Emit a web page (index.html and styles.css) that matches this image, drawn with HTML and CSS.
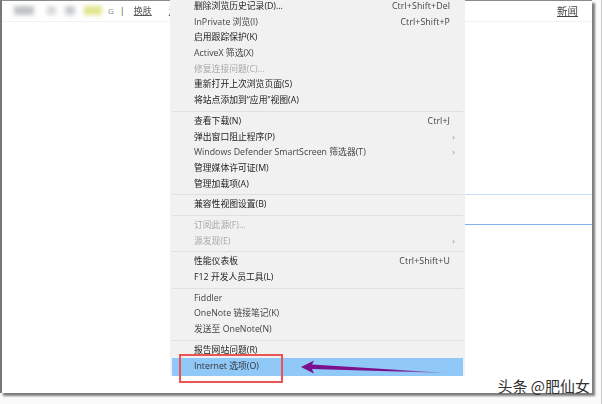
FILE: index.html
```
<!DOCTYPE html>
<html lang="zh-CN">
<head>
<meta charset="utf-8">
<title>Internet 选项</title>
<link rel="stylesheet" href="styles.css">
</head>
<body>
<div class="stage">
  <div class="window">
    <header class="topbar">
      <div class="patches">
        <span class="patch p1"></span><span class="patch p2"></span><span class="patch p3"></span><span class="patch p4"></span>
      </div>
      <span class="g">G</span><span class="pipe">|</span><a class="link skin">换肤</a><a class="link cut">退</a>
      <a class="link news">新闻</a>
    </header>
    <div class="rule r1"></div>
    <div class="rule r2"></div>
  </div>

  <nav class="menu">
    <div class="group first">
      <div class="item"><span>删除浏览历史记录(D)...</span><span class="key">Ctrl+Shift+Del</span></div>
      <div class="item"><span class="soft">InPrivate 浏览(I)</span><span class="key">Ctrl+Shift+P</span></div>
      <div class="item"><span>启用跟踪保护(K)</span></div>
      <div class="item"><span class="soft">ActiveX 筛选(X)</span></div>
      <div class="item off"><span>修复连接问题(C)...</span></div>
      <div class="item"><span>重新打开上次浏览页面(S)</span></div>
      <div class="item"><span>将站点添加到“应用”视图(A)</span></div>
    </div>
    <div class="group">
      <div class="item"><span>查看下载(N)</span><span class="key">Ctrl+J</span></div>
      <div class="item"><span>弹出窗口阻止程序(P)</span><span class="arrow">›</span></div>
      <div class="item"><span class="soft">Windows Defender SmartScreen 筛选器(T)</span><span class="arrow">›</span></div>
      <div class="item"><span>管理媒体许可证(M)</span></div>
      <div class="item"><span>管理加载项(A)</span></div>
    </div>
    <div class="group">
      <div class="item"><span>兼容性视图设置(B)</span></div>
    </div>
    <div class="group">
      <div class="item off"><span>订阅此源(F)...</span></div>
      <div class="item off"><span>源发现(E)</span><span class="arrow">›</span></div>
    </div>
    <div class="group">
      <div class="item"><span>性能仪表板</span><span class="key">Ctrl+Shift+U</span></div>
      <div class="item"><span>F12 开发人员工具(L)</span></div>
    </div>
    <div class="group">
      <div class="item"><span class="soft">Fiddler</span></div>
      <div class="item"><span class="soft">OneNote 链接笔记(K)</span></div>
      <div class="item"><span class="soft">发送至 OneNote(N)</span></div>
    </div>
    <div class="group">
      <div class="item"><span>报告网站问题(R)</span></div>
      <div class="item hot"><span>Internet 选项(O)</span></div>
    </div>
  </nav>

  <div class="redbox"></div>
  <svg class="pointer" width="150" height="16" viewBox="0 0 150 16" aria-hidden="true">
    <defs>
      <linearGradient id="fade" x1="0" x2="1" y1="0" y2="0">
        <stop offset="0.6" stop-color="#7b0f8c"/>
        <stop offset="1" stop-color="#7b0f8c" stop-opacity="0.25"/>
      </linearGradient>
    </defs>
    <path d="M0 7 L13 0.5 L11 4.5 L147 13 L11 9 L13 13.5 Z" fill="url(#fade)"/>
  </svg>
  <div class="mark">头条 @肥仙女</div>
</div>
</body>
</html>
```
FILE: styles.css
```
* { box-sizing: border-box; }
html, body { margin: 0; padding: 0; background: #fff; }
body { font-family: "Open Sans", "Noto Sans CJK SC", sans-serif; }

.stage {
  position: relative;
  width: 602px;
  height: 404px;
  overflow: hidden;
  background: #fbfbfb;
  border-right: 1px solid #c8c8c8;
}

.window {
  position: relative;
  width: 592px;
  height: 393px;
  background: #fff;
  border-top: 1px solid #8a8a8a;
  border-left: 2px solid #777;
  box-shadow: 3px 3px 2px #7d7d7d;
}

.topbar {
  display: flex;
  align-items: center;
  height: 21px;
  padding: 0 14px 2px 12px;
  border-bottom: 1px solid #f2f2f2;
  font-size: 10px;
  color: #666;
}

.patches { display: flex; align-items: center; gap: 9px; width: 92px; filter: blur(2px); }
.patch { display: block; height: 9px; background: #bfc3c6; }
.p1 { width: 20px; }
.p2 { width: 9px; background: #d8dadb; margin-left: 4px; }
.p3 { width: 10px; background: #c8cbce; }
.p4 { width: 18px; background: #dfe68c; }

.g { margin-left: 2px; font-size: 8px; color: #888; }
.pipe { margin-left: 6px; color: #444; font-size: 9px; }
.link { color: #555; text-decoration: underline; filter: blur(0.5px); }
.skin { margin-left: 9px; font-size: 9px; }
.cut { margin-left: 17px; font-size: 9px; }
.news { margin-left: auto; font-size: 10.5px; color: #444; }

.rule { position: absolute; left: 463px; right: 0; top: 193px; height: 1px; background: #c7dcf3; }
.r2 { top: 223px; background: #7fb3ea; }

.menu {
  position: absolute;
  left: 170px;
  top: -6px;
  width: 295px;
  height: 381px;
  padding: 3px 2px 0;
  background: #f1f1f1;
  display: flex;
  flex-direction: column;
  color: #222;
  font-size: 8.8px;
  line-height: 15.7px;
  filter: blur(0.5px);
}

.group {
  padding: 2px 0 2px;
  border-top: 1px solid #e0e0e0;
}
.group.first { border-top: 0; }
.group:last-child { padding-bottom: 0; }

.item {
  display: flex;
  align-items: center;
  justify-content: space-between;
  height: 15.7px;
  padding: 0 6px 0 22px;
  white-space: nowrap;
}
.soft { color: #444; }
.off { color: #aaa; }
.key { color: #444; margin-right: 7px; letter-spacing: 0.1px; }
.arrow { color: #999; margin-right: 2px; }
.item.hot { background: #90c8f8; color: #333; height: 18px; padding-bottom: 2px; }

.redbox {
  position: absolute;
  left: 179px;
  top: 354px;
  width: 104px;
  height: 29px;
  border: 2px solid #ea5554;
}

.pointer { position: absolute; left: 301px; top: 360px; }

.mark {
  position: absolute;
  right: 11px;
  top: 377px;
  font-size: 15px;
  line-height: 18px;
  color: #333;
  font-family: "Noto Sans CJK SC", sans-serif;
  white-space: nowrap;
}
```
